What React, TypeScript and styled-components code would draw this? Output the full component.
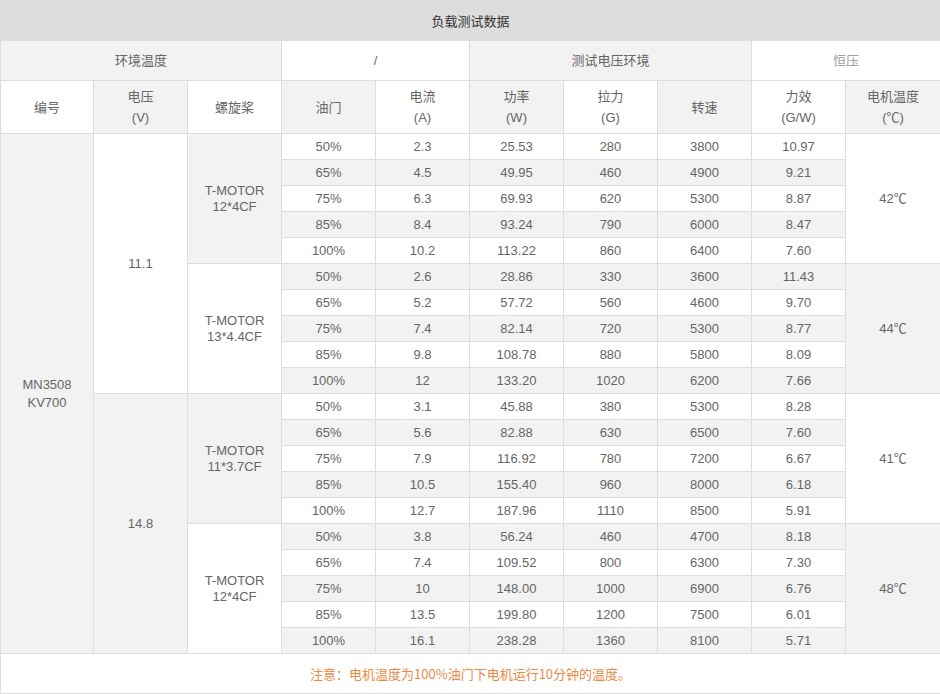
import React from "react";
import styled, { createGlobalStyle } from "styled-components";

const Global = createGlobalStyle`
  html, body { margin: 0; padding: 0; background: #fff; }
  body { font-family: "Liberation Sans", Arial, "Noto Sans CJK SC", sans-serif; }
`;

const Table = styled.table`
  width: 940px;
  table-layout: fixed;
  border-collapse: collapse;
  font-size: 13px;
  color: #666;
  font-family: "Liberation Sans", Arial, "Noto Sans CJK SC", sans-serif;
`;

const Col = styled.col<{ $w: number }>`
  width: ${(p) => p.$w}px;
`;

const TitleCell = styled.th`
  height: 39px;
  padding: 0;
  background: #dddddd;
  color: #333;
  font-weight: normal;
  font-size: 13px;
  border: 1px solid #dddddd;
  text-align: center;
`;

const Cell = styled.td<{ $gray?: boolean; $h?: number; $lh?: number; $muted?: boolean }>`
  height: ${(p) => p.$h ?? 25}px;
  padding: 0;
  text-align: center;
  vertical-align: middle;
  line-height: ${(p) => p.$lh ?? 16}px;
  background: ${(p) => (p.$gray ? "#f2f2f2" : "#ffffff")};
  color: ${(p) => (p.$muted ? "#a0a0a0" : "#666")};
  border: 1px solid #dddddd;
`;

const Note = styled.td`
  height: 39px;
  padding: 0;
  text-align: center;
  color: #ec8a45;
  border: 1px solid #dddddd;
  font-family: "Noto Sans CJK SC", "Liberation Sans", sans-serif;
  font-size: 13px;
`;

type Row = [string, string, string, string, string, string];

const groups: { prop: string[]; temp: string; rows: Row[] }[] = [
  {
    prop: ["T-MOTOR", "12*4CF"],
    temp: "42℃",
    rows: [
      ["50%", "2.3", "25.53", "280", "3800", "10.97"],
      ["65%", "4.5", "49.95", "460", "4900", "9.21"],
      ["75%", "6.3", "69.93", "620", "5300", "8.87"],
      ["85%", "8.4", "93.24", "790", "6000", "8.47"],
      ["100%", "10.2", "113.22", "860", "6400", "7.60"],
    ],
  },
  {
    prop: ["T-MOTOR", "13*4.4CF"],
    temp: "44℃",
    rows: [
      ["50%", "2.6", "28.86", "330", "3600", "11.43"],
      ["65%", "5.2", "57.72", "560", "4600", "9.70"],
      ["75%", "7.4", "82.14", "720", "5300", "8.77"],
      ["85%", "9.8", "108.78", "880", "5800", "8.09"],
      ["100%", "12", "133.20", "1020", "6200", "7.66"],
    ],
  },
  {
    prop: ["T-MOTOR", "11*3.7CF"],
    temp: "41℃",
    rows: [
      ["50%", "3.1", "45.88", "380", "5300", "8.28"],
      ["65%", "5.6", "82.88", "630", "6500", "7.60"],
      ["75%", "7.9", "116.92", "780", "7200", "6.67"],
      ["85%", "10.5", "155.40", "960", "8000", "6.18"],
      ["100%", "12.7", "187.96", "1110", "8500", "5.91"],
    ],
  },
  {
    prop: ["T-MOTOR", "12*4CF"],
    temp: "48℃",
    rows: [
      ["50%", "3.8", "56.24", "460", "4700", "8.18"],
      ["65%", "7.4", "109.52", "800", "6300", "7.30"],
      ["75%", "10", "148.00", "1000", "6900", "6.76"],
      ["85%", "13.5", "199.80", "1200", "7500", "6.01"],
      ["100%", "16.1", "238.28", "1360", "8100", "5.71"],
    ],
  },
];

const headers: { label: string; unit?: string }[] = [
  { label: "编号" },
  { label: "电压", unit: "(V)" },
  { label: "螺旋桨" },
  { label: "油门" },
  { label: "电流", unit: "(A)" },
  { label: "功率", unit: "(W)" },
  { label: "拉力", unit: "(G)" },
  { label: "转速" },
  { label: "力效", unit: "(G/W)" },
  { label: "电机温度", unit: "(℃)" },
];

const colWidths = [93, 94, 94, 94, 94, 94, 94, 94, 94, 95];

export default function App() {
  const bodyRows: React.ReactNode[] = [];
  groups.forEach((g, gi) => {
    g.rows.forEach((r, ri) => {
      const idx = gi * 5 + ri;
      const gray = idx % 2 === 1;
      bodyRows.push(
        <tr key={idx}>
          {idx === 0 && (
            <Cell rowSpan={20} $gray $lh={18}>
              MN3508
              <br />
              KV700
            </Cell>
          )}
          {ri === 0 && gi % 2 === 0 && (
            <Cell rowSpan={10} $gray={gi === 2}>
              {gi === 0 ? "11.1" : "14.8"}
            </Cell>
          )}
          {ri === 0 && (
            <Cell rowSpan={5} $gray={gi % 2 === 0}>
              {g.prop[0]}
              <br />
              {g.prop[1]}
            </Cell>
          )}
          {r.map((v, ci) => (
            <Cell key={ci} $gray={gray}>
              {v}
            </Cell>
          ))}
          {ri === 0 && (
            <Cell rowSpan={5} $gray={gi % 2 === 1}>
              {g.temp}
            </Cell>
          )}
        </tr>
      );
    });
  });

  return (
    <>
      <Global />
      <Table>
        <colgroup>
          {colWidths.map((w, i) => (
            <Col key={i} $w={w} />
          ))}
        </colgroup>
        <thead>
          <tr>
            <TitleCell colSpan={10}>负载测试数据</TitleCell>
          </tr>
          <tr>
            <Cell colSpan={3} $gray $h={39}>
              环境温度
            </Cell>
            <Cell colSpan={2} $h={39}>
              /
            </Cell>
            <Cell colSpan={3} $gray $h={39}>
              测试电压环境
            </Cell>
            <Cell colSpan={2} $h={39} $muted>
              恒压
            </Cell>
          </tr>
          <tr>
            {headers.map((h, i) => (
              <Cell key={i} $gray={i % 2 === 1} $h={52} $lh={21}>
                {h.label}
                {h.unit && (
                  <>
                    <br />
                    {h.unit}
                  </>
                )}
              </Cell>
            ))}
          </tr>
        </thead>
        <tbody>
          {bodyRows}
          <tr>
            <Note colSpan={10}>注意：电机温度为100%油门下电机运行10分钟的温度。</Note>
          </tr>
        </tbody>
      </Table>
    </>
  );
}
